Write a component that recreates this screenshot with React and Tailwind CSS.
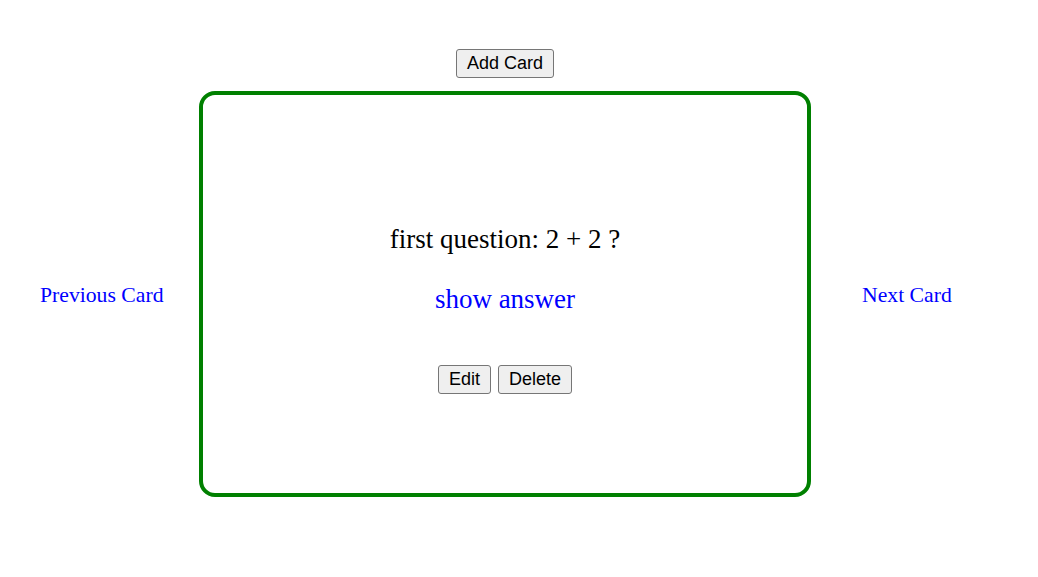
import React, { useState } from 'react';

const cards = [{ question: 'first question: 2 + 2 ?', answer: '4' }];

const btn =
  "bg-[#efefef] border border-[#767676] rounded-[3px] px-[10px] py-[3px] text-[18px] leading-[21px] text-black font-['Liberation_Sans',Arial,sans-serif] hover:bg-[#e5e5e5]";

const App = () => {
  const [index] = useState(0);
  const [showAnswer, setShowAnswer] = useState(false);
  const card = cards[index];

  return (
    <div className="min-h-screen w-full bg-white font-['Liberation_Serif','Times_New_Roman',serif]">
      <div className="flex w-[1010px] flex-col items-center pt-[49px]">
        <button className={btn} type="button">
          Add Card
        </button>
      </div>

      <div className="mt-[13px] flex items-center">
        {/* Previous */}
        <div className="w-[199px] pl-[40px] pt-[4px]">
          <a href="#" className="text-[21.7px] leading-[25px] text-[#0000ff]">
            Previous Card
          </a>
        </div>

        {/* Card */}
        <div className="flex h-[406px] w-[612px] flex-col items-center rounded-[16px] border-4 border-[#008000] pt-[129px]">
          <p className="text-[27px] leading-[30px] text-black">{card.question}</p>
          <a
            href="#"
            className="mt-[30px] text-[27px] leading-[30px] text-[#0000ff]"
            onClick={(e) => {
              e.preventDefault();
              setShowAnswer(!showAnswer);
            }}
          >
            {showAnswer ? card.answer : 'show answer'}
          </a>
          <div className="mt-[51px] flex gap-[7px]">
            <button className={btn} type="button">
              Edit
            </button>
            <button className={btn} type="button">
              Delete
            </button>
          </div>
        </div>

        {/* Next */}
        <div className="pl-[51px] pt-[4px]">
          <a href="#" className="text-[21.7px] leading-[25px] text-[#0000ff]">
            Next Card
          </a>
        </div>
      </div>
    </div>
  );
};

export default App;
